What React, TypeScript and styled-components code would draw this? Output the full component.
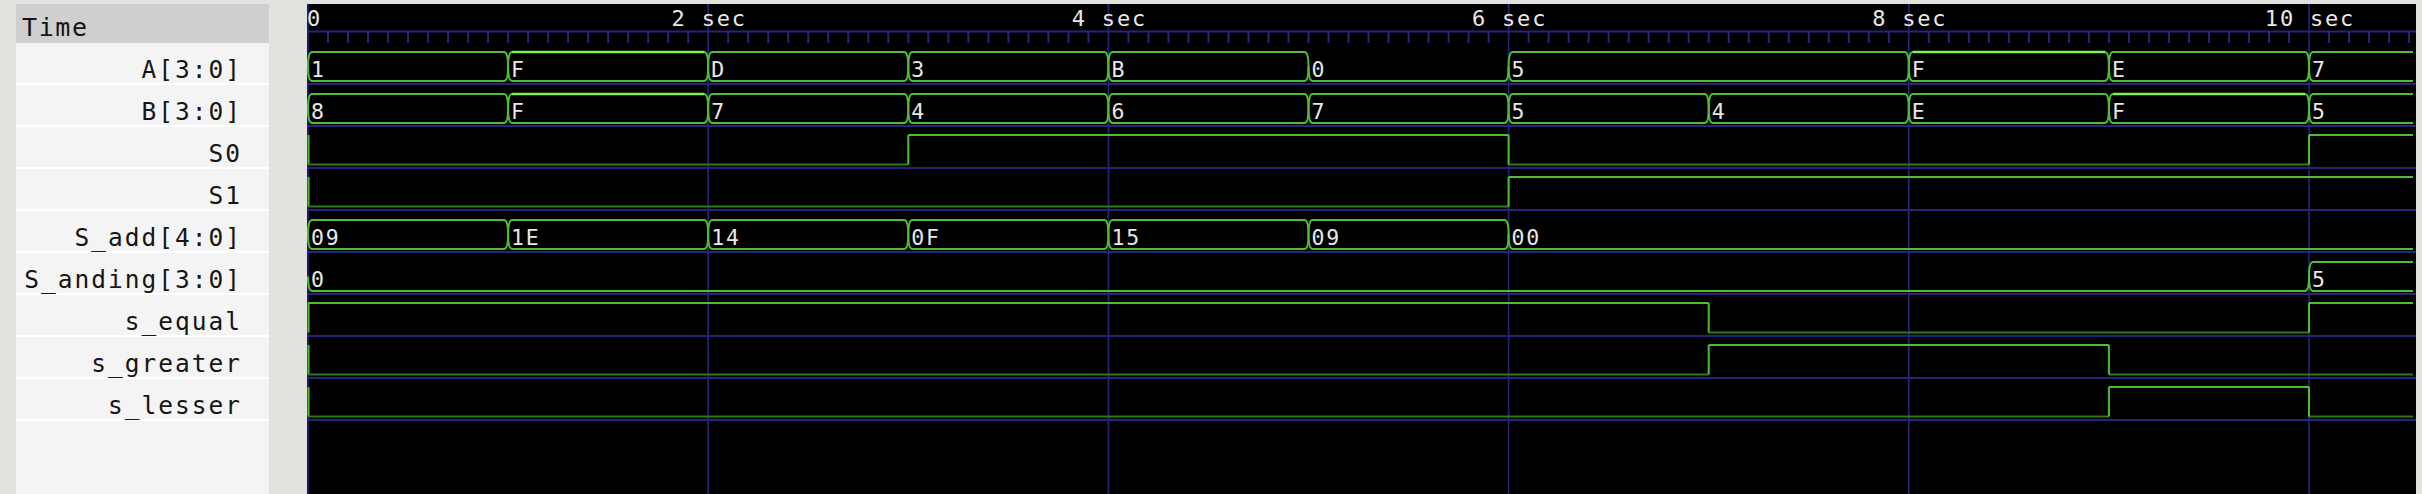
import React from "react";
import styled, { createGlobalStyle } from "styled-components";

const GlobalStyle = createGlobalStyle`
  html, body { margin: 0; padding: 0; background: #e3e2de; overflow: hidden; }
  #root { width: 2422px; height: 494px; }
`;

const PANEL_W = 2109;
const PANEL_H = 490;
const X0 = 1;
const PX_PER_SEC = 200.1;
const TRACE_END = 2106;
const ROW_TOP = 39;
const ROW_H = 42;

const GREEN = "#4dbf32";
const GREEN_LOW = "#2b7a22";
const LIME = "#84f04e";
const BLUE = "#25257c";

const xAt = (t: number) => X0 + t * PX_PER_SEC;

type BusSignal = { name: string; kind: "bus"; ones: string; segs: [number, string][] };
type BitSignal = { name: string; kind: "bit"; segs: [number, 0 | 1][] };
type Signal = BusSignal | BitSignal;

const signals: Signal[] = [
  { name: "A[3:0]", kind: "bus", ones: "F", segs: [[0, "1"], [1, "F"], [2, "D"], [3, "3"], [4, "B"], [5, "0"], [6, "5"], [8, "F"], [9, "E"], [10, "7"]] },
  { name: "B[3:0]", kind: "bus", ones: "F", segs: [[0, "8"], [1, "F"], [2, "7"], [3, "4"], [4, "6"], [5, "7"], [6, "5"], [7, "4"], [8, "E"], [9, "F"], [10, "5"]] },
  { name: "S0", kind: "bit", segs: [[0, 0], [3, 1], [6, 0], [10, 1]] },
  { name: "S1", kind: "bit", segs: [[0, 0], [6, 1]] },
  { name: "S_add[4:0]", kind: "bus", ones: "1F", segs: [[0, "09"], [1, "1E"], [2, "14"], [3, "0F"], [4, "15"], [5, "09"], [6, "00"]] },
  { name: "S_anding[3:0]", kind: "bus", ones: "F", segs: [[0, "0"], [10, "5"]] },
  { name: "s_equal", kind: "bit", segs: [[0, 1], [7, 0], [10, 1]] },
  { name: "s_greater", kind: "bit", segs: [[0, 0], [7, 1], [9, 0]] },
  { name: "s_lesser", kind: "bit", segs: [[0, 0], [9, 1], [10, 0]] },
];

/* ---------- layout ---------- */

const Window = styled.div`
  display: flex;
  align-items: stretch;
  height: 494px;
  padding-top: 4px;
  box-sizing: border-box;
`;

const SignalPanel = styled.div`
  margin-left: 16px;
  width: 253px;
  background: #f4f4f4;
  display: flex;
  flex-direction: column;
  font-family: "DejaVu Sans Mono", "Liberation Mono", monospace;
  color: #161616;
`;

const HeaderRow = styled.div`
  height: 39px;
  box-sizing: border-box;
  padding: 9px 0 0 6px;
  line-height: 29px;
  font-size: 25px;
  letter-spacing: 1.6px;
  background: #cfcfcf;
`;

const NameRow = styled.div`
  height: ${ROW_H}px;
  box-sizing: border-box;
  padding: 13px 27px 0 0;
  line-height: 27px;
  font-size: 24.5px;
  letter-spacing: 2px;
  text-align: right;
  white-space: nowrap;
  border-bottom: 2px solid #ffffff;
`;

const Divider = styled.div`
  width: 38px;
  flex: none;
`;

const WavePanel = styled.div`
  width: ${PANEL_W}px;
  height: ${PANEL_H}px;
  background: #000000;
  flex: none;
`;

const WaveSvg = styled.svg`
  display: block;
`;

const ValueText = styled.text`
  font-family: "DejaVu Sans Mono", "Liberation Mono", monospace;
  font-size: 21.5px;
  letter-spacing: 1.8px;
  fill: #e8e8e8;
`;

const TimeLabel = styled.text`
  font-family: "DejaVu Sans Mono", "Liberation Mono", monospace;
  font-size: 22px;
  letter-spacing: 1.8px;
  fill: #e8e8e8;
`;

/* ---------- drawing pieces ---------- */

const Ruler: React.FC = () => {
  const ticks: number[] = [];
  for (let k = 0; k * 20.01 + X0 < PANEL_W; k++) {
    if (k % 20 !== 0) ticks.push(X0 + k * 20.01);
  }
  const majors = [0, 2, 4, 6, 8, 10];
  return (
    <g>
      {majors.map((t) => (
        <line key={`g${t}`} x1={xAt(t)} x2={xAt(t)} y1={0} y2={PANEL_H} stroke={BLUE} strokeWidth={1.6} />
      ))}
      <line x1={0} x2={PANEL_W} y1={27.5} y2={27.5} stroke={BLUE} strokeWidth={2} />
      {ticks.map((x, i) => (
        <line key={i} x1={x} x2={x} y1={28} y2={39} stroke={BLUE} strokeWidth={2} />
      ))}
      {majors.map((t) =>
        t === 0 ? (
          <TimeLabel key={`l${t}`} x={0} y={22}>0</TimeLabel>
        ) : (
          <TimeLabel key={`l${t}`} x={xAt(t) + 1} y={22} textAnchor="middle">{`${t} sec`}</TimeLabel>
        )
      )}
      {signals.map((_, i) => (
        <line
          key={`r${i}`}
          x1={0}
          x2={PANEL_W}
          y1={ROW_TOP + ROW_H * i + 41}
          y2={ROW_TOP + ROW_H * i + 41}
          stroke={BLUE}
          strokeWidth={2}
        />
      ))}
    </g>
  );
};

const BusTrace: React.FC<{ sig: BusSignal; row: number }> = ({ sig, row }) => {
  const rt = ROW_TOP + ROW_H * row;
  const top = rt + 9;
  const bot = rt + 38;
  const mid = (top + bot) / 2;
  const w = 4;
  return (
    <g>
      {sig.segs.map(([t, v], i) => {
        const x0 = xAt(t);
        const last = i === sig.segs.length - 1;
        const x1 = last ? TRACE_END : xAt(sig.segs[i + 1][0]);
        const zero = /^0+$/.test(v);
        const ones = v === sig.ones;
        let d: string;
        if (zero) {
          d = `M ${x0} ${mid} Q ${x0} ${bot} ${x0 + w} ${bot} L ${last ? x1 : x1 - w} ${bot}` +
            (last ? "" : ` Q ${x1} ${bot} ${x1} ${mid}`);
        } else if (last) {
          d = `M ${x1} ${top} L ${x0 + w} ${top} Q ${x0} ${top} ${x0} ${mid} Q ${x0} ${bot} ${x0 + w} ${bot} L ${x1} ${bot}`;
        } else {
          d = `M ${x0 + w} ${top} L ${x1 - w} ${top} Q ${x1} ${top} ${x1} ${mid} Q ${x1} ${bot} ${x1 - w} ${bot} L ${x0 + w} ${bot} Q ${x0} ${bot} ${x0} ${mid} Q ${x0} ${top} ${x0 + w} ${top} Z`;
        }
        return (
          <g key={i}>
            <path d={d} fill="none" stroke={GREEN} strokeWidth={2} />
            {ones && (
              <line x1={x0 + w} x2={last ? x1 : x1 - w} y1={top} y2={top} stroke={LIME} strokeWidth={2.6} />
            )}
            <ValueText x={x0 + 3} y={rt + 34}>{v}</ValueText>
          </g>
        );
      })}
    </g>
  );
};

const BitTrace: React.FC<{ sig: BitSignal; row: number }> = ({ sig, row }) => {
  const rt = ROW_TOP + ROW_H * row;
  const high = rt + 8;
  const low = rt + 37.5;
  const parts: React.ReactNode[] = [];
  parts.push(<line key="init" x1={X0 + 0.5} x2={X0 + 0.5} y1={high} y2={low} stroke={GREEN} strokeWidth={2} />);
  sig.segs.forEach(([t, v], i) => {
    const x0 = xAt(t);
    const x1 = i === sig.segs.length - 1 ? TRACE_END : xAt(sig.segs[i + 1][0]);
    const y = v ? high : low;
    parts.push(
      <line key={`h${i}`} x1={x0} x2={x1} y1={y} y2={y} stroke={v ? GREEN : GREEN_LOW} strokeWidth={2} />
    );
    if (i > 0) {
      parts.push(<line key={`v${i}`} x1={x0} x2={x0} y1={high} y2={low} stroke={GREEN} strokeWidth={2} />);
    }
  });
  return <g>{parts}</g>;
};

const Waveforms: React.FC = () => (
  <WaveSvg width={PANEL_W} height={PANEL_H} viewBox={`0 0 ${PANEL_W} ${PANEL_H}`}>
    <Ruler />
    {signals.map((s, i) =>
      s.kind === "bus" ? <BusTrace key={s.name} sig={s} row={i} /> : <BitTrace key={s.name} sig={s} row={i} />
    )}
  </WaveSvg>
);

export default function App() {
  return (
    <>
      <GlobalStyle />
      <Window>
        <SignalPanel>
          <HeaderRow>Time</HeaderRow>
          {signals.map((s) => (
            <NameRow key={s.name}>{s.name}</NameRow>
          ))}
        </SignalPanel>
        <Divider />
        <WavePanel>
          <Waveforms />
        </WavePanel>
      </Window>
    </>
  );
}
